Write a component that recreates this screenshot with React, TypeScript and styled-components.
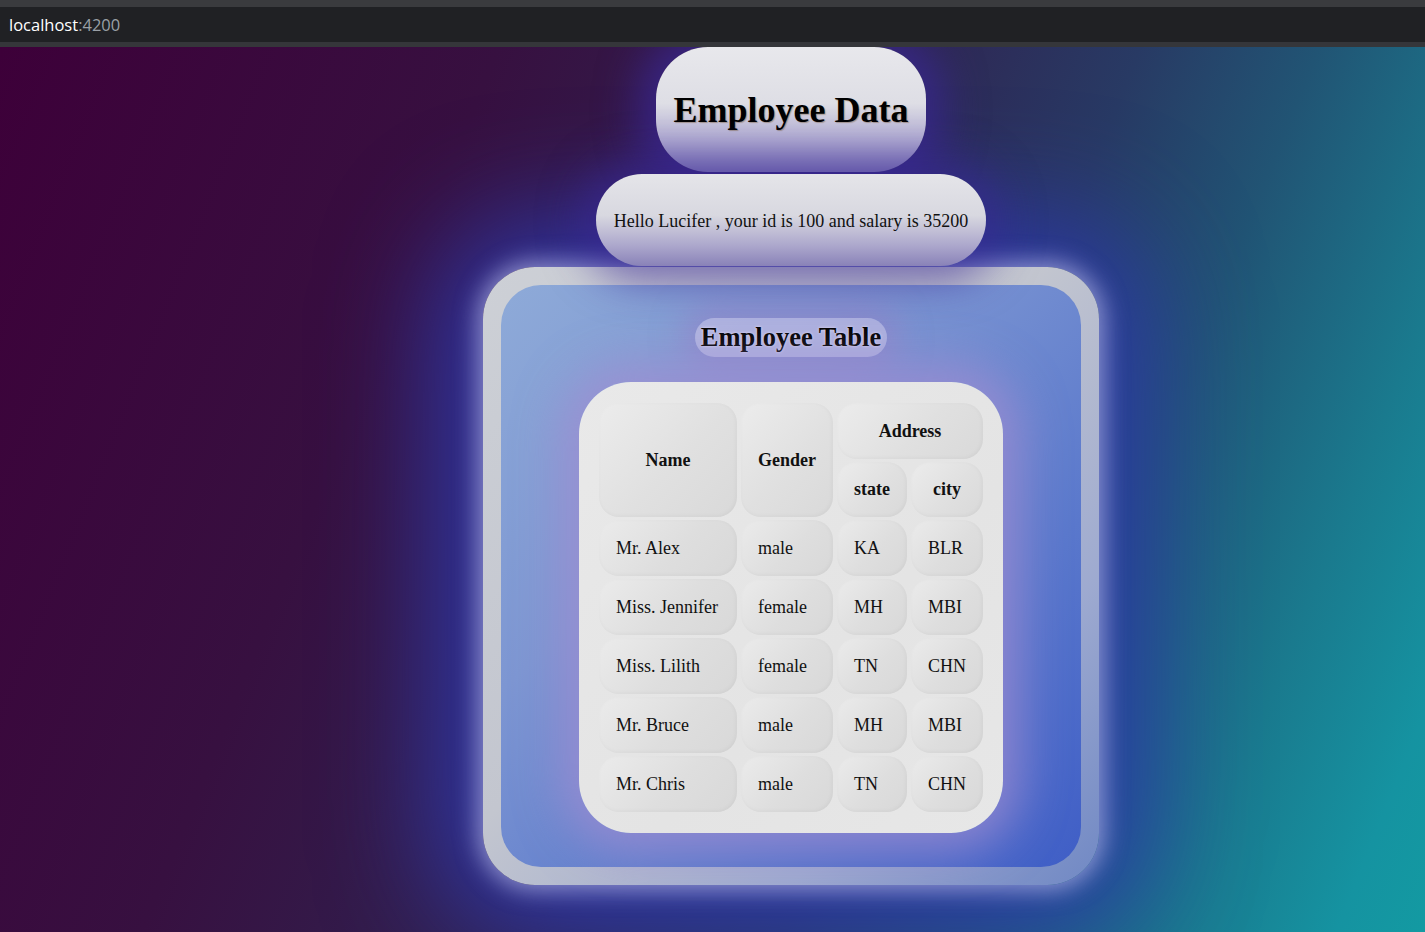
import styled, { createGlobalStyle } from 'styled-components'

const GlobalStyle = createGlobalStyle`
  html, body {
    margin: 0;
    padding: 0;
    height: 100%;
  }
  body {
    font-family: "Liberation Serif", "Times New Roman", serif;
    background: #202124;
    overflow: hidden;
  }
`

interface Employee {
  name: string
  gender: string
  state: string
  city: string
}

const employees: Employee[] = [
  { name: 'Mr. Alex', gender: 'male', state: 'KA', city: 'BLR' },
  { name: 'Miss. Jennifer', gender: 'female', state: 'MH', city: 'MBI' },
  { name: 'Miss. Lilith', gender: 'female', state: 'TN', city: 'CHN' },
  { name: 'Mr. Bruce', gender: 'male', state: 'MH', city: 'MBI' },
  { name: 'Mr. Chris', gender: 'male', state: 'TN', city: 'CHN' },
]

const Screen = styled.div`
  width: 1425px;
  height: 932px;
  display: flex;
  flex-direction: column;
`

const BrowserBar = styled.header`
  height: 35px;
  border-top: 7px solid #3a3b3e;
  border-bottom: 5px solid #35363a;
  background: #202124;
  display: flex;
  align-items: center;
  padding-left: 9px;
  font-family: "Open Sans", "Noto Sans", sans-serif;
  font-size: 16.5px;
  color: #ffffff;
  span {
    color: #9aa0a6;
  }
`

const Page = styled.main`
  flex: 1;
  display: flex;
  flex-direction: column;
  align-items: center;
  padding-left: 157px;
  overflow: hidden;
  background: linear-gradient(
    112deg,
    #3d0039 0%,
    #371040 28%,
    #302452 50%,
    #283a64 64%,
    #215474 74%,
    #1a7a8e 86%,
    #1593a1 95%,
    #139aa2 100%
  );
`

const Title = styled.h1`
  margin: 0;
  padding: 42px 18px 41px;
  font-size: 36px;
  font-weight: 700;
  color: #000;
  border-radius: 52px;
  background: linear-gradient(to bottom, #e8e8ec 0%, #dedee5 45%, #b3aed3 75%, #8a83bd 100%);
  box-shadow: 0 0 40px 18px rgba(58, 40, 150, 0.75);
  text-shadow: 1px 1px 1px rgba(110, 80, 30, 0.4);
  position: relative;
  z-index: 2;
`

const Greeting = styled.p`
  margin: 2px 0 1px;
  padding: 37px 18px 34px;
  font-size: 18px;
  color: #111;
  border-radius: 46px;
  background: linear-gradient(to bottom, #e5e5e9 0%, #d8d8e0 45%, #aca7cc 78%, #8982b8 100%);
  box-shadow: 0 0 40px 16px rgba(58, 40, 150, 0.6);
  position: relative;
  z-index: 2;
`

const Card = styled.section`
  width: 580px;
  padding: 18px;
  border-radius: 52px;
  background: linear-gradient(135deg, #cdd0d6 0%, #c3c6cf 45%, #9eaad0 75%, #7088c4 100%);
  box-shadow: 0 0 22px 6px rgba(225, 225, 255, 0.5), 0 0 110px 50px rgba(46, 56, 172, 0.9);
  position: relative;
  z-index: 1;
`

const Panel = styled.div`
  border-radius: 40px;
  padding: 33px 0 34px;
  display: flex;
  flex-direction: column;
  align-items: center;
  background: linear-gradient(135deg, #8eaad8 0%, #7d96d2 35%, #5a78cc 70%, #3f5ec6 100%);
`

const TableTitle = styled.h2`
  margin: 0 0 25px;
  padding: 4px 6px;
  font-size: 26.5px;
  font-weight: 700;
  color: #000;
  border-radius: 20px;
  background: rgba(200, 192, 230, 0.65);
  box-shadow: 0 0 30px 14px rgba(150, 130, 200, 0.55);
  text-shadow: 0 0 3px rgba(255, 240, 255, 0.8);
`

const TableBox = styled.div`
  padding: 18px 16px;
  border-radius: 52px;
  background: linear-gradient(135deg, #e9e9e9 0%, #e4e4e4 60%, #e7e7e7 100%);
  box-shadow: 0 0 45px 18px rgba(160, 140, 210, 0.75);
`

const Table = styled.table`
  width: 392px;
  table-layout: fixed;
  border-collapse: separate;
  border-spacing: 4px 3px;
  font-size: 18px;
  color: #111;
`

const HeadCell = styled.th<{ $height: number }>`
  height: ${(p) => p.$height}px;
  padding: 0;
  font-weight: 700;
  text-align: center;
  border-radius: 20px;
  background: linear-gradient(135deg, #ececec 0%, #e0e0e0 55%, #d9d9d9 100%);
  box-shadow: inset -1px -1px 4px rgba(0, 0, 0, 0.04);
`

const Cell = styled.td`
  height: 56px;
  padding: 0 0 0 17px;
  text-align: left;
  border-radius: 20px;
  background: linear-gradient(135deg, #ebebeb 0%, #dedede 55%, #d8d8d8 100%);
  box-shadow: inset -1px -1px 4px rgba(0, 0, 0, 0.04);
`

const App: React.FC = () => {
  return (
    <Screen>
      <GlobalStyle />
      <BrowserBar>
        localhost<span>:4200</span>
      </BrowserBar>
      <Page>
        <Title>Employee Data</Title>
        <Greeting>Hello Lucifer , your id is 100 and salary is 35200</Greeting>
        <Card>
          <Panel>
            <TableTitle>Employee Table</TableTitle>
            <TableBox>
              <Table>
                <colgroup>
                  <col style={{ width: 138 }} />
                  <col style={{ width: 92 }} />
                  <col style={{ width: 70 }} />
                  <col style={{ width: 72 }} />
                </colgroup>
                <thead>
                  <tr>
                    <HeadCell $height={56} rowSpan={2}>
                      Name
                    </HeadCell>
                    <HeadCell $height={56} rowSpan={2}>
                      Gender
                    </HeadCell>
                    <HeadCell $height={56} colSpan={2}>
                      Address
                    </HeadCell>
                  </tr>
                  <tr>
                    <HeadCell $height={55}>state</HeadCell>
                    <HeadCell $height={55}>city</HeadCell>
                  </tr>
                </thead>
                <tbody>
                  {employees.map((e) => (
                    <tr key={e.name}>
                      <Cell>{e.name}</Cell>
                      <Cell>{e.gender}</Cell>
                      <Cell>{e.state}</Cell>
                      <Cell>{e.city}</Cell>
                    </tr>
                  ))}
                </tbody>
              </Table>
            </TableBox>
          </Panel>
        </Card>
      </Page>
    </Screen>
  )
}

export default App
